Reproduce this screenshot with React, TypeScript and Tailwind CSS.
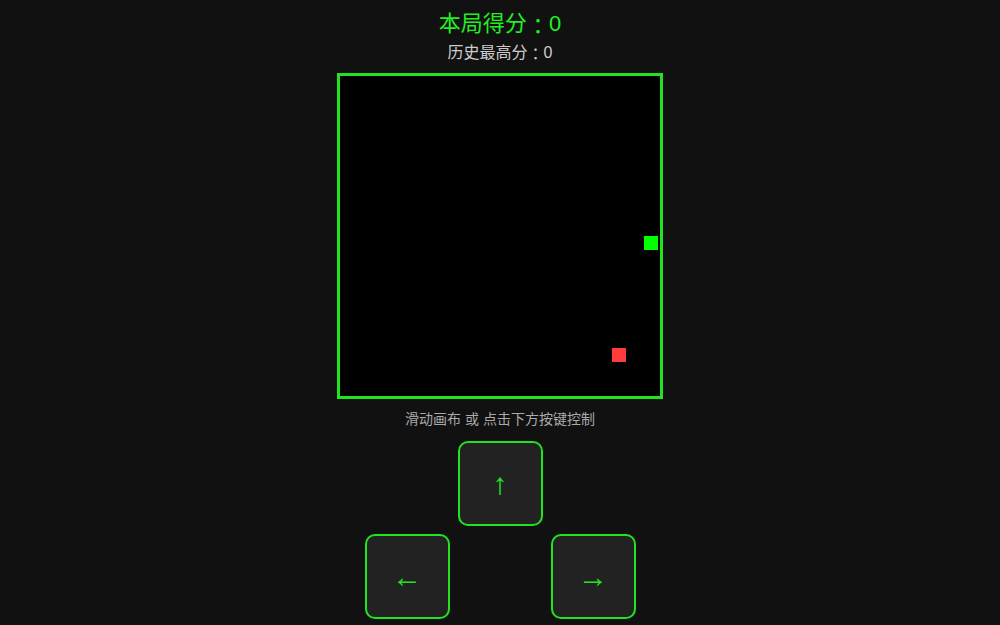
import React from "react";

const CELL = 16;
const snake = [{ x: 19, y: 10 }];
const food = { x: 17, y: 17 };

function Cell({ x, y, color }: { x: number; y: number; color: string }) {
  return (
    <div
      className="absolute"
      style={{
        left: x * CELL,
        top: y * CELL,
        width: CELL - 2,
        height: CELL - 2,
        background: color,
      }}
    />
  );
}

function Key({ label }: { label: string }) {
  return (
    <button className="w-[85px] h-[85px] rounded-[10px] border-2 border-[#22e322] bg-[#222222] text-[#22e322] text-[30px] leading-none grid place-items-center">
      {label}
    </button>
  );
}

// centred full-width colon, as the TC face draws it
function Colon() {
  return (
    <span className="leading-none" style={{ fontFamily: '"Noto Sans CJK TC", sans-serif' }}>
      ：
    </span>
  );
}

export default function App() {
  const font = { fontFamily: '"Liberation Sans", "Noto Sans CJK SC", sans-serif' };

  return (
    <div className="min-h-screen bg-[#111111] flex flex-col items-center pt-[9px]" style={font}>
      <h1 className="h-[30px] flex items-center text-[22px] leading-[30px] text-[#22ee22]">
        本局得分<Colon />0
      </h1>
      <div className="mt-[2px] h-[24px] flex items-center text-[16px] leading-[24px] text-[#cccccc]">
        历史最高分<Colon />0
      </div>

      <div className="mt-[8px] border-[3px] border-[#22e322] bg-black">
        <div className="relative w-[320px] h-[320px]">
          {snake.map((s, i) => (
            <Cell key={i} x={s.x} y={s.y} color="#00ff00" />
          ))}
          <Cell x={food.x} y={food.y} color="#ff3b3b" />
        </div>
      </div>

      <p className="mt-[10px] text-[14px] leading-[20px] text-[#aaaaaa]">
        滑动画布 或 点击下方按键控制
      </p>

      <div className="mt-[12px] grid grid-cols-[85px_85px_85px] gap-[8px]">
        <div />
        <Key label="↑" />
        <div />
        <Key label="←" />
        <div />
        <Key label="→" />
      </div>
    </div>
  );
}
